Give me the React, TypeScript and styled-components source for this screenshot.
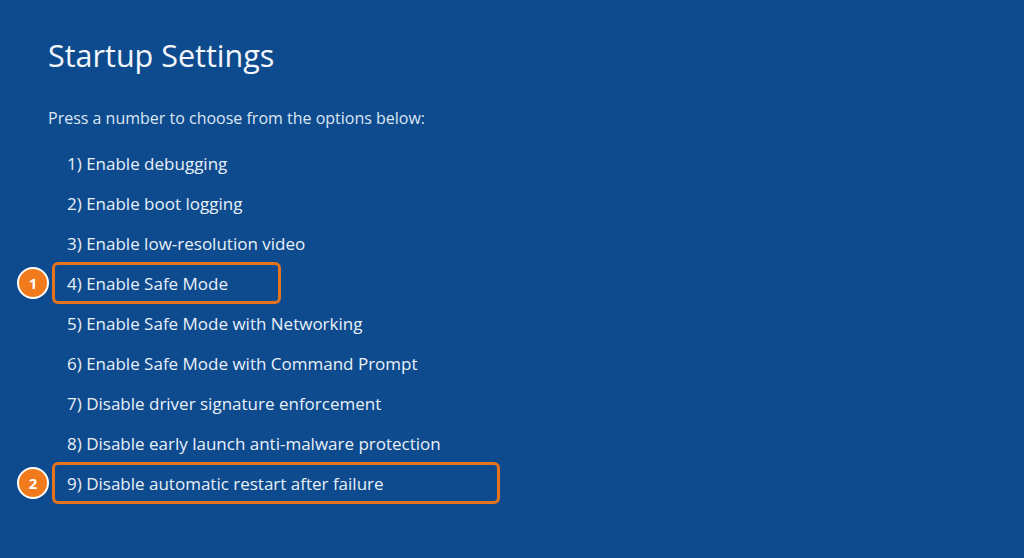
import { styled, createGlobalStyle } from 'styled-components'

const GlobalStyle = createGlobalStyle`
  html, body {
    margin: 0;
    padding: 0;
    background: #0e4b8e;
  }
  body {
    font-family: "Open Sans", "Noto Sans", "Liberation Sans", sans-serif;
  }
`

interface iOption {
  label: string;
  badge?: number;
  boxWidth?: number;
}

const options: iOption[] = [
  { label: '1) Enable debugging' },
  { label: '2) Enable boot logging' },
  { label: '3) Enable low-resolution video' },
  { label: '4) Enable Safe Mode', badge: 1, boxWidth: 229 },
  { label: '5) Enable Safe Mode with Networking' },
  { label: '6) Enable Safe Mode with Command Prompt' },
  { label: '7) Disable driver signature enforcement' },
  { label: '8) Disable early launch anti-malware protection' },
  { label: '9) Disable automatic restart after failure', badge: 2, boxWidth: 448 },
]

const App = () => {
  return (
    <>
      <GlobalStyle />
      <Screen>
        <Title>Startup Settings</Title>
        <Hint>Press a number to choose from the options below:</Hint>
        <List>
          {options.map((o) => (
            <Row key={o.label}>
              {o.badge && <Badge>{o.badge}</Badge>}
              <Item $boxed={!!o.badge} style={o.boxWidth ? { width: o.boxWidth } : undefined}>
                {o.label}
              </Item>
            </Row>
          ))}
        </List>
      </Screen>
    </>
  )
}

export default App;

const Screen = styled.div`
width: 1024px;
height: 558px;
background-color: #0e4b8e;
color: #e9f0f8;
padding: 35px 0 0 48px;
box-sizing: border-box;
overflow: hidden;
`
const Title = styled.h1`
margin: 0;
font-size: 30.5px;
font-weight: 400;
line-height: 40px;
color: #f4f7fb;
`
const Hint = styled.div`
margin-top: 31px;
font-size: 16px;
line-height: 24px;
color: #dbe6f3;
`
const List = styled.div`
margin-top: 13px;
display: flex;
flex-direction: column;
`
const Row = styled.div`
position: relative;
height: 40px;
display: flex;
align-items: center;
`
const Item = styled.div<{ $boxed: boolean }>`
box-sizing: border-box;
height: 42px;
display: flex;
align-items: center;
margin-left: 4px;
padding-left: 12px;
font-size: 17px;
color: #e9f0f8;
border: 3px solid ${(p) => (p.$boxed ? '#e5741f' : 'transparent')};
border-radius: 6px;
`
const Badge = styled.div`
position: absolute;
left: -31px;
top: 50%;
transform: translateY(-50%);
width: 32px;
height: 32px;
box-sizing: border-box;
border-radius: 50%;
border: 2.5px solid #ffffff;
background-color: #f07a1c;
color: #ffffff;
font-size: 15px;
font-weight: 700;
display: flex;
justify-content: center;
align-items: center;
`
